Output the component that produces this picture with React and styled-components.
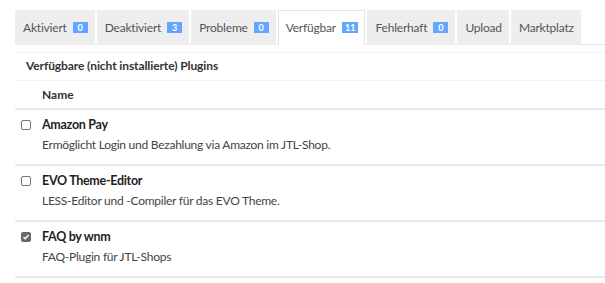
import React from 'react'
import styled, { createGlobalStyle } from 'styled-components'

const GlobalStyle = createGlobalStyle`
  body {
    margin: 0;
    background: #fff;
    font-family: Lato, "Liberation Sans", sans-serif;
    font-size: 12px;
    color: #444;
  }
`

const Page = styled.div`
  padding: 10px 0 0 15px;
`

const TabBar = styled.ul`
  display: flex;
  gap: 2px;
  margin: 0;
  padding: 0;
  list-style: none;
  border-bottom: 1px solid #e2e2e2;
`

const Tab = styled.li`
  display: flex;
  align-items: center;
  gap: 6px;
  height: 35px;
  box-sizing: border-box;
  padding: 0 6px 0 7px;
  font-size: 12px;
  letter-spacing: -0.2px;
  color: #555;
  background: ${p => (p.active ? '#fff' : '#eeeeee')};
  border: 1px solid ${p => (p.active ? '#e2e2e2' : '#eeeeee')};
  border-bottom-color: ${p => (p.active ? '#fff' : '#eeeeee')};
  margin-bottom: -1px;
`

const Badge = styled.span`
  display: inline-block;
  min-width: 15px;
  height: 11px;
  padding: 0 3px;
  box-sizing: border-box;
  background: #62a6ff;
  color: #fff;
  font-size: 9px;
  font-weight: 700;
  letter-spacing: 0;
  line-height: 11px;
  text-align: center;
`

const Card = styled.div`
  margin-top: 7px;
  border-top: 1px solid #f3f3f3;
`

const CardTitle = styled.div`
  height: 28px;
  display: flex;
  align-items: center;
  padding-left: 11px;
  padding-bottom: 2px;
  box-sizing: border-box;
  font-size: 12px;
  font-weight: 700;
  letter-spacing: -0.1px;
  color: #333;
  border-bottom: 1px solid #f3f3f3;
`

const HeadRow = styled.div`
  display: grid;
  grid-template-columns: 27px 1fr;
  height: 27px;
  align-items: center;
  border-bottom: 2px solid #e9e9e9;
  font-weight: 700;
  color: #333;
`

const Row = styled.div`
  display: grid;
  grid-template-columns: 27px 1fr;
  height: 56px;
  box-sizing: border-box;
  padding-top: 7px;
  border-bottom: 2px solid #e9e9e9;
`

const Box = styled.span`
  margin: 3px 0 0 6px;
  width: 10px;
  height: 10px;
  box-sizing: border-box;
  border: 1px solid ${p => (p.checked ? '#666' : '#777')};
  border-radius: 2px;
  background: ${p => (p.checked ? '#6b6b6b' : '#fff')};
  display: flex;
  align-items: center;
  justify-content: center;
`

const Title = styled.div`
  font-weight: 700;
  font-size: 12.5px;
  letter-spacing: -0.3px;
  color: #222;
  line-height: 16px;
`

const Desc = styled.div`
  margin-top: 4px;
  color: #444;
  letter-spacing: -0.25px;
  line-height: 16px;
`

const tabs = [
  ['Aktiviert', '0'],
  ['Deaktiviert', '3'],
  ['Probleme', '0'],
  ['Verfügbar', '11', true],
  ['Fehlerhaft', '0'],
  ['Upload'],
  ['Marktplatz'],
]

const plugins = [
  ['Amazon Pay', 'Ermöglicht Login und Bezahlung via Amazon im JTL-Shop.', false],
  ['EVO Theme-Editor', 'LESS-Editor und -Compiler für das EVO Theme.', false],
  ['FAQ by wnm', 'FAQ-Plugin für JTL-Shops', true],
]

export default function App() {
  return (
    <Page>
      <GlobalStyle />
      <TabBar>
        {tabs.map(([label, count, active]) => (
          <Tab key={label} active={active}>
            {label}
            {count && <Badge>{count}</Badge>}
          </Tab>
        ))}
      </TabBar>
      <Card>
        <CardTitle>Verfügbare (nicht installierte) Plugins</CardTitle>
        <HeadRow>
          <span />
          <span>Name</span>
        </HeadRow>
        {plugins.map(([name, desc, checked]) => (
          <Row key={name}>
            <Box checked={checked}>
              {checked && (
                <svg width="8" height="8" viewBox="0 0 8 8">
                  <path d="M1.5 4.2 L3.2 5.8 L6.5 2" fill="none" stroke="#fff" strokeWidth="1.4" />
                </svg>
              )}
            </Box>
            <div>
              <Title>{name}</Title>
              <Desc>{desc}</Desc>
            </div>
          </Row>
        ))}
      </Card>
    </Page>
  )
}
